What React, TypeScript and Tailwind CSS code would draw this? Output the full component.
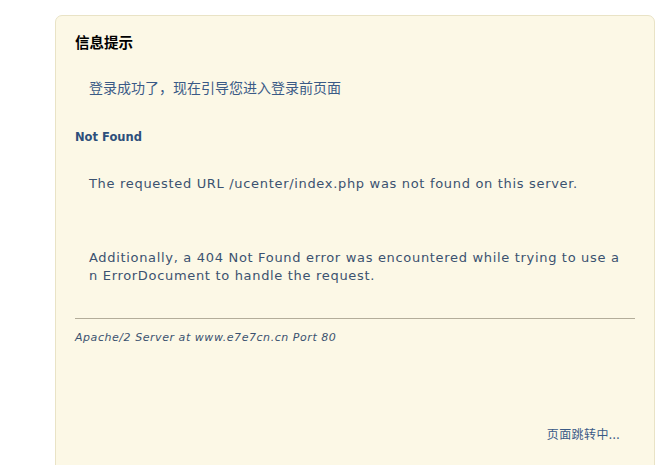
export default function App() {
  return (
    <div className="h-[465px] overflow-hidden bg-white pl-[55px] pt-[15px] pr-[17px]">
      <div className="min-h-[470px] rounded-t-[7px] border border-[#e9e3c6] bg-[#fcf8e6] pl-[19px] pr-[19px] pt-[16px] text-[#3b5270] [font-family:'DejaVu_Sans',Tahoma,'Noto_Sans_CJK_SC',sans-serif]">
        <h1 className="text-[14.5px] leading-[20px] font-bold text-black [font-family:'Noto_Sans_CJK_SC',sans-serif]">
          信息提示
        </h1>
        <p className="mt-[25px] pl-[14px] text-[14px] leading-[20px] text-[#3a5a86] [font-family:'Noto_Sans_CJK_SC',sans-serif]">
          登录成功了，现在引导您进入登录前页面
        </p>
        <h2 className="mt-[32px] text-[11.5px] leading-[16px] font-bold text-[#2d4f7b]">Not Found</h2>
        <p className="mt-[30px] pl-[14px] text-[13px] leading-[18px] tracking-[0.68px]">
          The requested URL /ucenter/index.php was not found on this server.
        </p>
        <p className="mt-[56px] w-[546px] pl-[14px] text-[13px] leading-[18px] tracking-[0.68px] break-all">
          Additionally, a 404 Not Found error was encountered while trying to use an ErrorDocument to handle the request.
        </p>
        <hr className="mt-[33px] border-t border-[#b3ad9a]" />
        <address className="mt-[11px] text-[11px] leading-[16px] italic tracking-[0.55px]">
          Apache/2 Server at www.e7e7cn.cn Port 80
        </address>
        <div className="mt-[79px] pr-[15px] text-right text-[12px] leading-[18px] tracking-[0.4px] text-[#3a5a86] [font-family:'Noto_Sans_CJK_SC',sans-serif]">
          页面跳转中...
        </div>
      </div>
    </div>
  );
}
